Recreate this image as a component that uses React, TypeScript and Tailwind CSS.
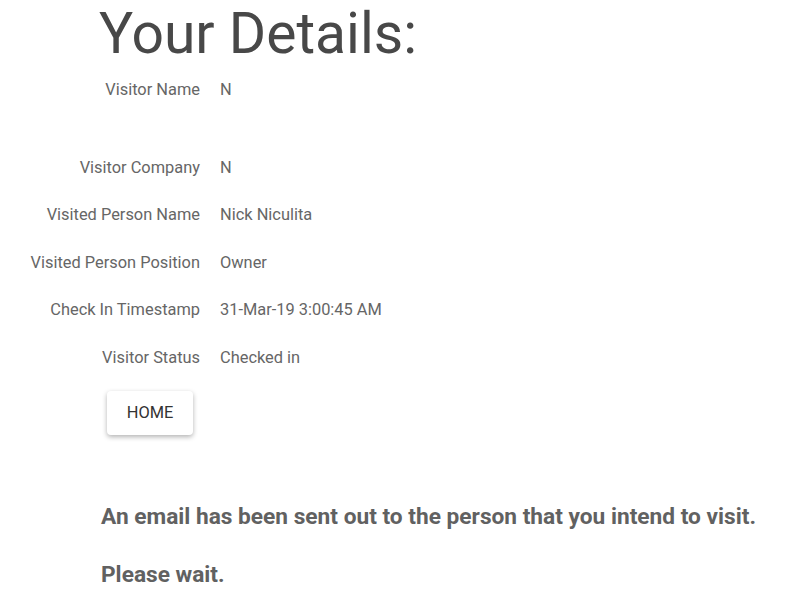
import * as React from 'react';

const rows: { label: string; value: string; gapAfter?: boolean }[] = [
  { label: 'Visitor Name', value: 'N', gapAfter: true },
  { label: 'Visitor Company', value: 'N' },
  { label: 'Visited Person Name', value: 'Nick Niculita' },
  { label: 'Visited Person Position', value: 'Owner' },
  { label: 'Check In Timestamp', value: '31-Mar-19 3:00:45 AM' },
  { label: 'Visitor Status', value: 'Checked in' },
];

export default function App() {
  return (
    <div className="min-h-[600px] w-[800px] bg-white font-['Roboto',sans-serif] text-[#666666]">
      {/* Header */}
      <h1 className="pl-[99px] pt-[5px] text-[57px] leading-[57px] font-normal text-[#484848]">
        Your Details:
      </h1>

      {/* Details */}
      <div className="mt-[5px]">
        {rows.map((row) => (
          <div key={row.label} className={row.gapAfter ? 'mb-[30px]' : ''}>
            <div className="flex h-[47.5px] items-center text-[16.4px]">
              <div className="w-[200px] text-right">{row.label}</div>
              <div className="pl-[20px]">{row.value}</div>
            </div>
          </div>
        ))}
      </div>

      <div className="mt-[9px] pl-[107px]">
        <button className="h-[44px] w-[86px] rounded-[4px] bg-white text-[16.4px] text-[#333333] shadow-[0_2px_5px_rgba(0,0,0,0.3)]">
          HOME
        </button>
      </div>

      {/* Message */}
      <div className="mt-[68px] pl-[101px] text-[22.7px] font-bold text-[#616161]">
        <p className="leading-[28px]">An email has been sent out to the person that you intend to visit.</p>
        <p className="mt-[30px] leading-[28px]">Please wait.</p>
      </div>
    </div>
  );
}
